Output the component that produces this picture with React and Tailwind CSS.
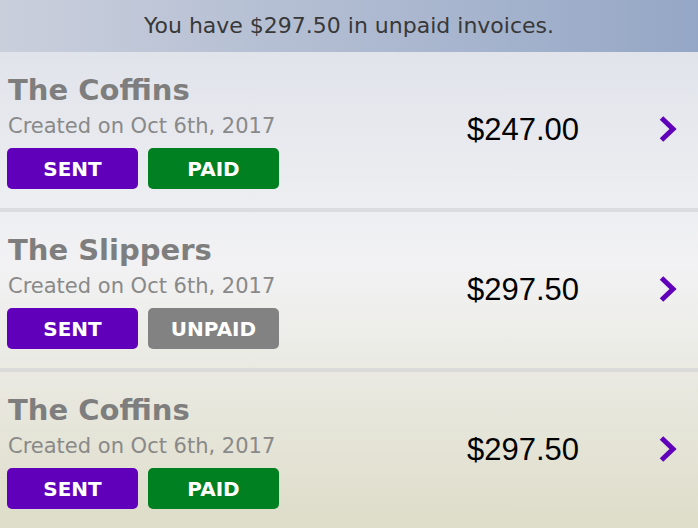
const invoices = [
  { name: "The Coffins", date: "Created on Oct 6th, 2017", amount: "$247.00", paid: true },
  { name: "The Slippers", date: "Created on Oct 6th, 2017", amount: "$297.50", paid: false },
  { name: "The Coffins", date: "Created on Oct 6th, 2017", amount: "$297.50", paid: true },
];

function Badge({ children, className }) {
  return (
    <div
      className={`w-[131px] h-[41px] rounded-[5px] flex items-center justify-center text-white text-[20px] leading-none font-bold ${className}`}
    >
      {children}
    </div>
  );
}

function Chevron() {
  return (
    <svg width="19" height="28" viewBox="0 0 19 28" fill="none">
      <polyline points="3.5,3 15,14 3.5,25" stroke="#6100bb" strokeWidth="5" strokeLinejoin="miter" />
    </svg>
  );
}

function InvoiceRow({ invoice }) {
  return (
    <div className="h-[156px] flex pl-[7px] pr-[21px]">
      <div className="flex-1 flex flex-col pt-[21px]">
        <div className="pl-[1px] text-[29px] leading-[34px] font-bold text-[#7e7e7e]">{invoice.name}</div>
        <div className="pl-[1px] text-[21px] leading-[26px] text-[#898989] mt-[6px]">{invoice.date}</div>
        <div className="flex gap-[10px] mt-[9px]">
          <Badge className="bg-[#6100bb]">SENT</Badge>
          {invoice.paid ? (
            <Badge className="bg-[#008020]">PAID</Badge>
          ) : (
            <Badge className="bg-[#828282]">UNPAID</Badge>
          )}
        </div>
      </div>
      <div className="w-[191px] flex items-center font-['Liberation_Sans',sans-serif] text-[31px] text-black pt-[1px]">
        {invoice.amount}
      </div>
      <div className="flex items-center pb-[2px]">
        <Chevron />
      </div>
    </div>
  );
}

export default function App() {
  return (
    <div
      className="w-[698px] h-[528px] overflow-hidden bg-gradient-to-b from-[#dce0e8] via-[#f2f2f4] to-[#deddc9]"
      style={{ fontFamily: "'DejaVu Sans', 'Liberation Sans', sans-serif" }}
    >
      <div className="h-[52px] flex items-center justify-center pb-[2px] bg-gradient-to-r from-[#cacfdc] to-[#95a7c6] text-[22px] text-[#383838]">
        You have $297.50 in unpaid invoices.
      </div>
      {invoices.map((inv, i) => (
        <div key={i}>
          <InvoiceRow invoice={inv} />
          <div className="h-[4px] bg-[#cfd0d4]/60" />
        </div>
      ))}
    </div>
  );
}
